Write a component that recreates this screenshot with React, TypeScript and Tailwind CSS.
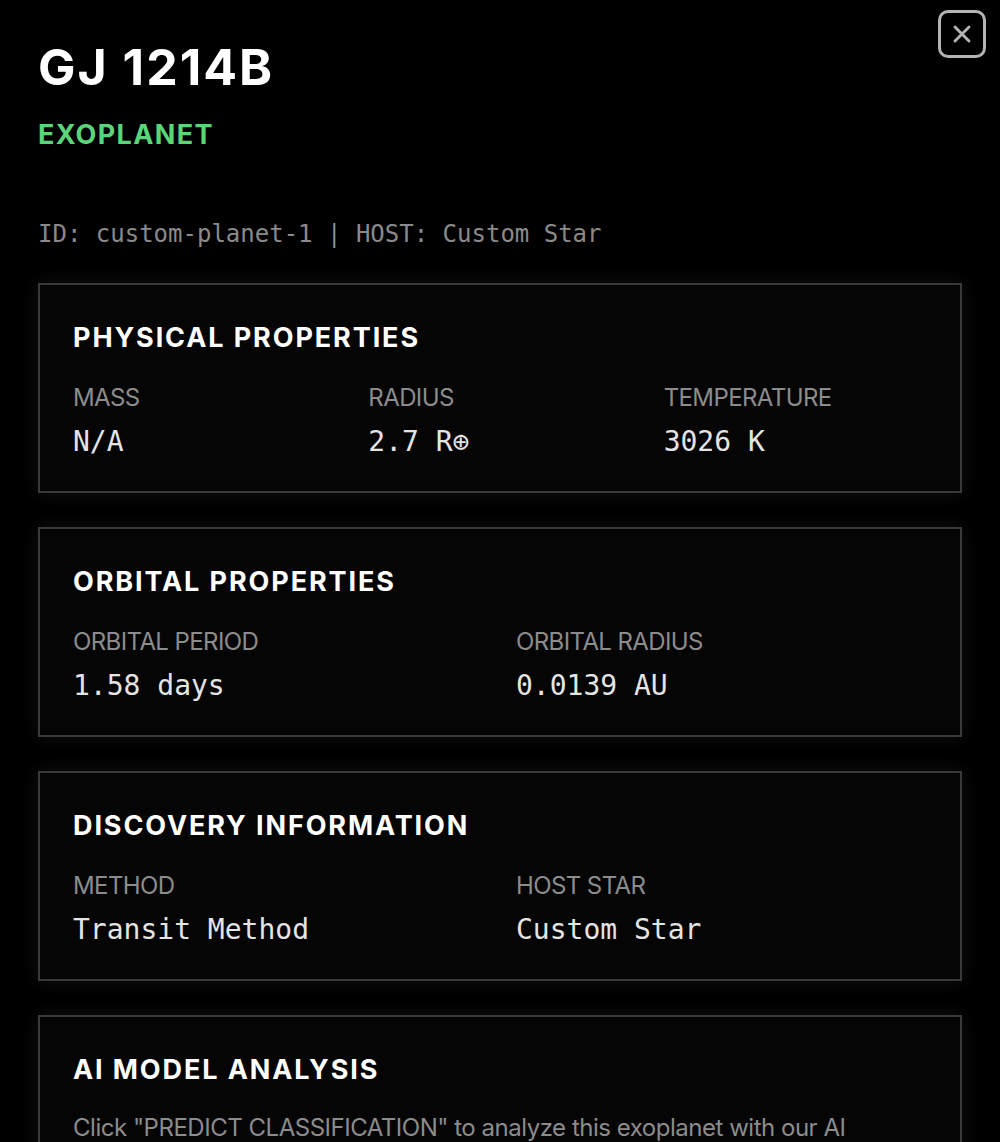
import { X } from "lucide-react";

const mono = { fontFamily: '"DejaVu Sans Mono", "Liberation Mono", monospace' };

const Card = ({ title, children }: any) => (
  <div className="border-2 border-[#3a3a3a] bg-[#050505] px-[33px] pt-[35px] pb-[33px] shadow-[0_0_18px_rgba(255,255,255,0.07)]">
    <h2 className="text-[27px] font-bold tracking-[0.07em] text-white leading-[36px]">{title}</h2>
    {children}
  </div>
);

const Field = ({ label, value }: any) => (
  <div>
    <div className="text-[24px] tracking-[-0.025em] text-[#8c8c8c] leading-[30px]">{label}</div>
    <div className="mt-[13px] text-[28px] text-[#e4e4e4] leading-[32px]" style={mono}>
      {value}
    </div>
  </div>
);

export default function App() {
  return (
    <div className="min-h-screen bg-black" style={{ fontFamily: 'Inter, "Liberation Sans", sans-serif' }}>
      <div className="relative px-[38px] pt-[39px] pb-10">
        <button className="absolute right-[14px] top-[10px] flex h-[48px] w-[48px] items-center justify-center rounded-[10px] border-[3px] border-[#b4b4b4] text-[#b4b4b4]">
          <X className="h-[28px] w-[28px]" strokeWidth={2.5} />
        </button>

        <h1 className="text-[50px] font-bold leading-[56px] tracking-[0.04em] text-white">GJ 1214B</h1>
        <div className="mt-[22px] text-[27px] font-bold leading-[36px] tracking-[0.05em] text-[#5ad57a]">EXOPLANET</div>

        <div className="mt-[65px] text-[24px] leading-[32px] text-[#8a8a8a]" style={mono}>
          ID: custom-planet-1 | HOST: Custom Star
        </div>

        <div className="mt-[33px] flex flex-col gap-[34px]">
          <Card title="PHYSICAL PROPERTIES">
            <div className="mt-[27px] grid grid-cols-3 gap-8">
              <Field label="MASS" value="N/A" />
              <Field label="RADIUS" value="2.7 R⊕" />
              <Field label="TEMPERATURE" value="3026 K" />
            </div>
          </Card>

          <Card title="ORBITAL PROPERTIES">
            <div className="mt-[27px] grid grid-cols-2 gap-8">
              <Field label="ORBITAL PERIOD" value="1.58 days" />
              <Field label="ORBITAL RADIUS" value="0.0139 AU" />
            </div>
          </Card>

          <Card title="DISCOVERY INFORMATION">
            <div className="mt-[27px] grid grid-cols-2 gap-8">
              <Field label="METHOD" value="Transit Method" />
              <Field label="HOST STAR" value="Custom Star" />
            </div>
          </Card>

          <Card title="AI MODEL ANALYSIS">
            <p className="mt-[24px] text-[24px] leading-[32px] tracking-[-0.02em] text-[#8c8c8c]">
              Click "PREDICT CLASSIFICATION" to analyze this exoplanet with our AI
              <br />
              model and compare the result with its catalogued disposition.
            </p>
          </Card>
        </div>
      </div>
    </div>
  );
}
